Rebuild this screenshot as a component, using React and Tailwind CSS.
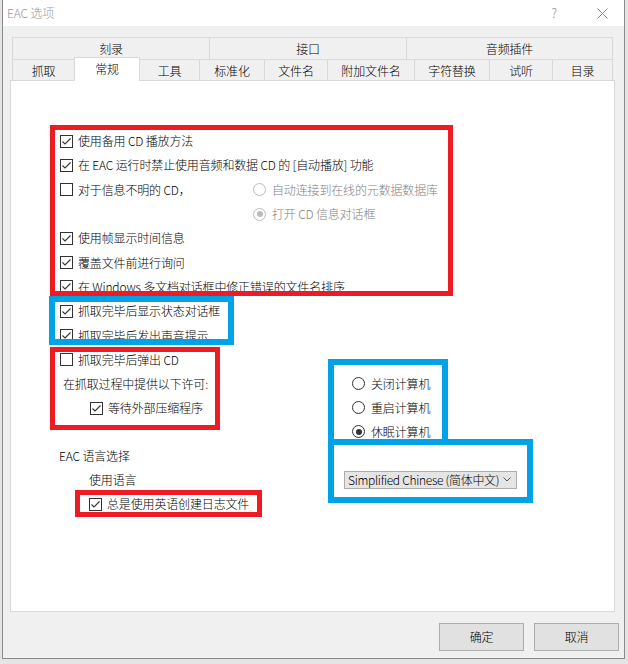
import React from 'react';

const topTabs = [
  { label: '刻录', w: 'w-[197px]' },
  { label: '接口', w: 'w-[197px]' },
  { label: '音频插件', w: 'w-[207px]' },
];

const bottomTabs = [
  { label: '抓取', w: 'w-[62px]' },
  { label: '常规', w: 'w-[66px]', active: true },
  { label: '工具', w: 'w-[59px]' },
  { label: '标准化', w: 'w-[65px]' },
  { label: '文件名', w: 'w-[63px]' },
  { label: '附加文件名', w: 'w-[87px]' },
  { label: '字符替换', w: 'w-[75px]' },
  { label: '试听', w: 'w-[63px]' },
  { label: '目录', w: 'w-[61px]' },
];

function Check({ checked }) {
  return (
    <span className="w-[13px] h-[13px] border border-[#333] bg-white flex items-center justify-center shrink-0">
      {checked && (
        <svg width="11" height="11" viewBox="0 0 11 11">
          <polyline points="1.5,5.5 4,8 9.5,2.5" fill="none" stroke="#333" strokeWidth="1.1" />
        </svg>
      )}
    </span>
  );
}

function Radio({ checked, disabled }) {
  return (
    <span
      className={
        'w-[13px] h-[13px] rounded-full border bg-white flex items-center justify-center shrink-0 ' +
        (disabled ? 'border-[#bcbcbc]' : 'border-[#333]')
      }
    >
      {checked && (
        <span className={'w-[6px] h-[6px] rounded-full ' + (disabled ? 'bg-[#bcbcbc]' : 'bg-[#333]')} />
      )}
    </span>
  );
}

function CheckRow({ checked, children, className = '' }) {
  return (
    <div className={'h-[24.3px] flex items-center gap-[5px] ' + className}>
      <Check checked={checked} />
      <span>{children}</span>
    </div>
  );
}

function RadioItem({ checked, disabled, children }) {
  return (
    <div className="flex items-center gap-[6px]">
      <Radio checked={checked} disabled={disabled} />
      <span className={disabled ? 'text-[#808080]' : ''}>{children}</span>
    </div>
  );
}

export default function App() {
  return (
    <div className="relative w-[628px] h-[664px] bg-[#e4e4e4] overflow-hidden text-[12px] font-light tracking-[-0.15px] text-black font-['Noto_Sans_CJK_SC','Liberation_Sans',sans-serif]">
      <div className="ml-[2px] w-[623px] h-[659px] border-l border-r border-b border-[#8a8a8a] bg-[#f0f0f0] flex flex-col">
        {/* title bar */}
        <div className="h-[26px] bg-white flex items-center pl-[4px] text-[#999]">
          <span>EAC 选项</span>
          <span className="ml-auto mr-[40px] text-[13px]">?</span>
          <svg width="11" height="11" viewBox="0 0 11 11" className="mr-[16px]">
            <path d="M0.5 0.5 L10.5 10.5 M10.5 0.5 L0.5 10.5" stroke="#888" strokeWidth="1" />
          </svg>
        </div>

        <div className="pt-[11px] px-[7px]">
          {/* tabs */}
          <div className="ml-[2px] w-[601px]">
            <div className="flex h-[22px]">
              {topTabs.map((t, i) => (
                <div
                  key={t.label}
                  className={
                    t.w +
                    ' flex items-center justify-center border-t border-l border-[#d9d9d9] ' +
                    (i === topTabs.length - 1 ? 'border-r' : '')
                  }
                >
                  {t.label}
                </div>
              ))}
            </div>
            <div className="flex h-[21px]">
              {bottomTabs.map((t, i) =>
                t.active ? (
                  <div
                    key={t.label}
                    className={t.w + ' relative z-10 h-[24px] -mt-[2px] -mb-[1px] bg-white border-t border-l border-r border-[#d9d9d9] flex items-center justify-center pb-[2px]'}
                  >
                    {t.label}
                  </div>
                ) : (
                  <div
                    key={t.label}
                    className={
                      t.w +
                      ' flex items-center justify-center pt-[2px] border-t border-[#d9d9d9] ' +
                      (i === 2 ? '' : 'border-l ') +
                      (i === bottomTabs.length - 1 ? 'border-r' : '')
                    }
                  >
                    {t.label}
                  </div>
                )
              )}
            </div>
          </div>

          {/* panel */}
          <div className="w-[605px] h-[532px] bg-white border border-[#d9d9d9] pt-[48px] pl-[49px]">
            <CheckRow checked>使用备用 CD 播放方法</CheckRow>
            <CheckRow checked>在 EAC 运行时禁止使用音频和数据 CD 的 [自动播放] 功能</CheckRow>
            <div className="h-[24.3px] flex items-center">
              <div className="w-[193px] flex items-center gap-[5px]">
                <Check />
                <span>对于信息不明的 CD，</span>
              </div>
              <RadioItem disabled>自动连接到在线的元数据数据库</RadioItem>
            </div>
            <div className="h-[24.3px] flex items-center pl-[193px]">
              <RadioItem disabled checked>打开 CD 信息对话框</RadioItem>
            </div>
            <CheckRow checked>使用帧显示时间信息</CheckRow>
            <CheckRow checked>覆盖文件前进行询问</CheckRow>
            <CheckRow checked>在 Windows 多文档对话框中修正错误的文件名排序</CheckRow>
            <CheckRow checked>抓取完毕后显示状态对话框</CheckRow>
            <CheckRow checked>抓取完毕后发出声音提示</CheckRow>

            <div className="flex">
              <div className="w-[284px]">
                <CheckRow>抓取完毕后弹出 CD</CheckRow>
                <div className="h-[24.3px] flex items-center pl-[3px]">在抓取过程中提供以下许可:</div>
                <CheckRow checked className="pl-[30px]">等待外部压缩程序</CheckRow>
                <div className="h-[24px] mt-[23px] flex items-center -ml-[1px]">EAC 语言选择</div>
                <div className="h-[24.3px] flex items-center pl-[29px]">使用语言</div>
                <CheckRow checked className="pl-[29px]">总是使用英语创建日志文件</CheckRow>
              </div>
              <div className="pt-[24.3px]">
                <div className="pl-[8px]">
                  <div className="h-[24px] flex items-center"><RadioItem>关闭计算机</RadioItem></div>
                  <div className="h-[24px] flex items-center"><RadioItem>重启计算机</RadioItem></div>
                  <div className="h-[24px] flex items-center"><RadioItem checked>休眠计算机</RadioItem></div>
                </div>
                <div className="mt-[27px] w-[173px] h-[18px] bg-[#e5e5e5] border border-[#adadad] flex items-center pl-[3px] pr-[5px]">
                  <span className="tracking-[-0.3px]">Simplified Chinese (简体中文)</span>
                  <svg width="8" height="5" viewBox="0 0 8 5" className="ml-auto">
                    <polyline points="0.5,0.5 4,4 7.5,0.5" fill="none" stroke="#555" strokeWidth="1" />
                  </svg>
                </div>
              </div>
            </div>
          </div>

          {/* buttons */}
          <div className="flex justify-end gap-[10px] mt-[11px] -mr-[2px]">
            <button className="w-[85px] h-[28px] bg-[#e1e1e1] border border-[#adadad]">确定</button>
            <button className="w-[85px] h-[28px] bg-[#e1e1e1] border border-[#adadad]">取消</button>
          </div>
        </div>
      </div>

      {/* annotation boxes */}
      <div className="absolute left-[50px] top-[125px] w-[403px] h-[171px] border-[5px] border-[#ed1c24] pointer-events-none" />
      <div className="absolute left-[49px] top-[296px] w-[185px] h-[49px] border-[6px] border-[#00a2e8] pointer-events-none" />
      <div className="absolute left-[50px] top-[347px] w-[170px] h-[83px] border-[5px] border-[#ed1c24] pointer-events-none" />
      <div className="absolute left-[328px] top-[359px] w-[120px] h-[86px] border-[6px] border-[#00a2e8] pointer-events-none" />
      <div className="absolute left-[328px] top-[439px] w-[205px] h-[64px] border-[6px] border-[#00a2e8] pointer-events-none" />
      <div className="absolute left-[75px] top-[490px] w-[187px] h-[27px] border-[5px] border-[#ed1c24] pointer-events-none" />
    </div>
  );
}
